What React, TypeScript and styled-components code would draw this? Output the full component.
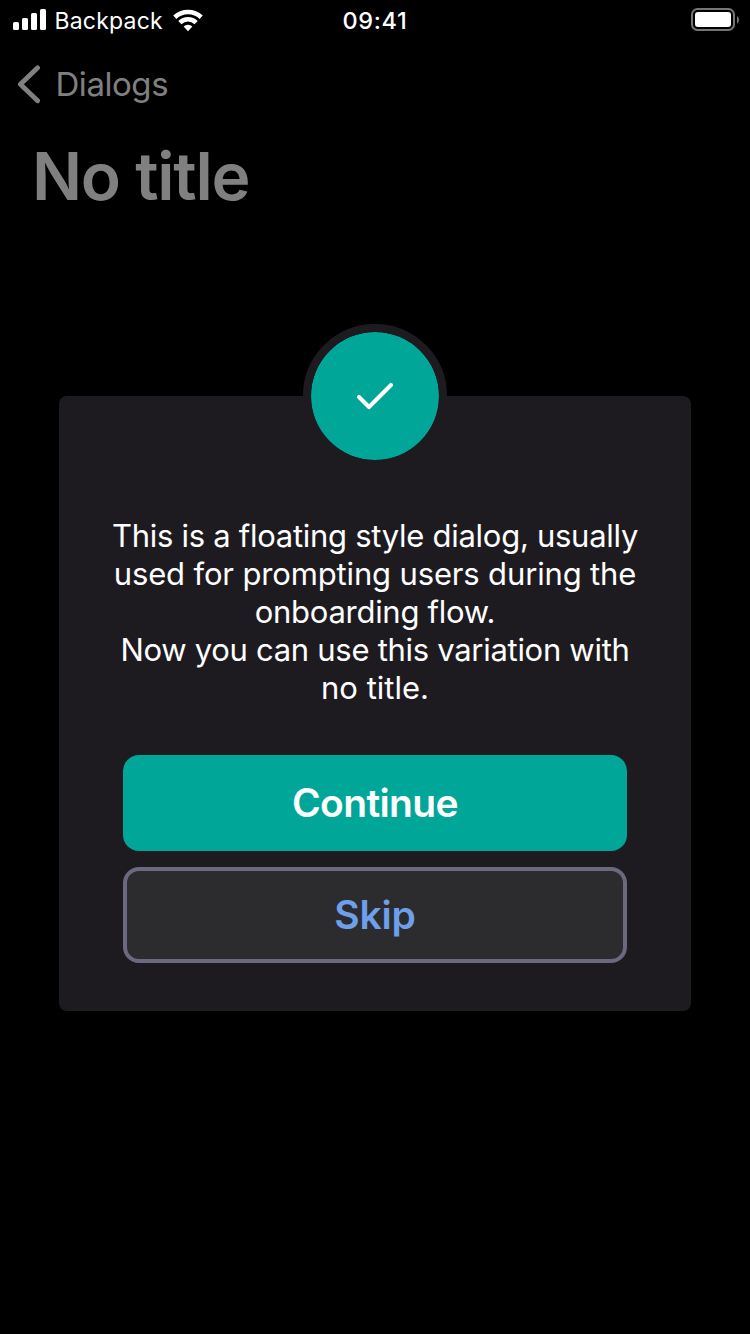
import React from 'react';
import styled, { createGlobalStyle } from 'styled-components';

const GlobalStyle = createGlobalStyle`
  * { box-sizing: border-box; }
  body {
    margin: 0;
    background: #000;
    font-family: Inter, "Liberation Sans", sans-serif;
    -webkit-font-smoothing: antialiased;
  }
`;

const Screen = styled.div`
  width: 750px;
  height: 1334px;
  display: flex;
  flex-direction: column;
  overflow: hidden;
  background: #000;
`;

const StatusBar = styled.header`
  height: 40px;
  display: grid;
  grid-template-columns: 1fr auto 1fr;
  color: #fff;
  font-size: 23px;
  line-height: 42px;
`;

const Network = styled.div`
  display: flex;
  padding-left: 13px;
`;

const Carrier = styled.span`
  width: 124.5px;
  padding-left: 7.5px;
  letter-spacing: 0.2px;
  white-space: nowrap;
`;

const Clock = styled.time`
  font-size: 23.5px;
  font-weight: 550;
  letter-spacing: 0.7px;
`;

const Power = styled.div`
  display: flex;
  justify-content: flex-end;
  padding-right: 11px;
`;

const NavBar = styled.nav`
  height: 88px;
  display: flex;
  align-items: center;
  padding-left: 16px;
  color: #808080;
`;

const BackLabel = styled.span`
  padding-left: 13.5px;
  font-size: 33px;
  line-height: 40px;
  letter-spacing: -0.45px;
`;

const PageTitle = styled.h1`
  margin: 0;
  height: 196px;
  padding: 8px 0 0 32px;
  color: #808080;
  font-size: 66px;
  font-weight: 600;
  line-height: 80px;
  letter-spacing: -1.25px;
`;

const Dialog = styled.section`
  width: 632px;
  align-self: center;
  margin-top: 72px;
  padding: 0 48px 48px;
  border-radius: 8px;
  background: #1e1b20;
  display: flex;
  flex-direction: column;
  align-items: center;
`;

const Badge = styled.div`
  width: 144px;
  height: 144px;
  margin-top: -72px;
  border: 8px solid #1e1b20;
  border-radius: 50%;
  background: #00a698;
  background-clip: padding-box;
  display: flex;
  align-items: center;
  justify-content: center;
`;

const Message = styled.p`
  margin: 49px 0 48px;
  color: #fff;
  font-size: 31px;
  line-height: 38px;
  text-align: center;
`;

const Line = styled.span<{ $tracking?: number }>`
  display: block;
  white-space: nowrap;
  letter-spacing: ${({ $tracking = 0 }) => $tracking}px;
`;

const Actions = styled.div`
  width: 504px;
  display: flex;
  flex-direction: column;
  gap: 16px;
`;

const Button = styled.button<{ $secondary?: boolean }>`
  height: 96px;
  padding: 0;
  border: ${({ $secondary }) => ($secondary ? '4px solid #6a6980' : '0')};
  border-radius: 16px;
  background: ${({ $secondary }) => ($secondary ? '#2c2c2e' : '#00a698')};
  color: ${({ $secondary }) => ($secondary ? '#6d9feb' : '#fff')};
  font-family: inherit;
  font-size: 39px;
  font-weight: 600;
  line-height: 48px;
  letter-spacing: ${({ $secondary }) => ($secondary ? '-0.1px' : '-0.65px')};
`;

const SignalIcon = () => (
  <svg width="34" height="40" fill="#fff">
    <rect x="0" y="22" width="6" height="8" rx="1.5" />
    <rect x="9" y="18" width="6" height="12" rx="1.5" />
    <rect x="18" y="13" width="6" height="17" rx="1.5" />
    <rect x="27" y="9" width="6" height="21" rx="1.5" />
  </svg>
);

const WifiIcon = () => (
  <svg width="32" height="40" viewBox="171.5 0 32 40" fill="none" stroke="#fff" strokeWidth="4.7">
    <path d="M174.3 17.2a19.4 19.4 0 0 1 26.4 0" />
    <path d="M179.4 22.6a11.5 11.5 0 0 1 16.2 0" />
    <path d="M187.5 31.2l-4.4-4.7a6.4 6.4 0 0 1 8.8 0z" fill="#fff" stroke="none" />
  </svg>
);

const BatteryIcon = () => (
  <svg width="48" height="40" fill="none">
    <rect x="1" y="9" width="42" height="21" rx="5.5" stroke="#757575" strokeWidth="2" />
    <rect x="4" y="12" width="36" height="15" rx="3" fill="#fff" />
    <path d="M46 16c2.6 1.4 2.6 6.2 0 7.6z" fill="#757575" />
  </svg>
);

const BackIcon = () => (
  <svg width="26" height="40" viewBox="16 64 26 40" fill="none" stroke="#808080" strokeWidth="4.8" strokeLinecap="round" strokeLinejoin="round">
    <path d="M37.6 67.8L20.4 84.3l17.2 16.5" />
  </svg>
);

const CheckIcon = () => (
  <svg width="48" height="48" viewBox="351 372 48 48" fill="none" stroke="#fff" strokeWidth="4.1" strokeLinecap="round" strokeLinejoin="round">
    <path d="M359 397l10 10 22-22" />
  </svg>
);

export default function App() {
  return (
    <Screen>
      <GlobalStyle />
      <StatusBar>
        <Network>
          <SignalIcon />
          <Carrier>Backpack</Carrier>
          <WifiIcon />
        </Network>
        <Clock>09:41</Clock>
        <Power>
          <BatteryIcon />
        </Power>
      </StatusBar>
      <NavBar>
        <BackIcon />
        <BackLabel>Dialogs</BackLabel>
      </NavBar>
      <PageTitle>No title</PageTitle>
      <Dialog role="dialog">
        <Badge>
          <CheckIcon />
        </Badge>
        <Message>
          <Line $tracking={-0.28}>This is a floating style dialog, usually</Line>
          <Line $tracking={-0.15}>used for prompting users during the</Line>
          <Line $tracking={-0.28}>onboarding flow.</Line>
          <Line $tracking={-0.29}>Now you can use this variation with</Line>
          <Line>no title.</Line>
        </Message>
        <Actions>
          <Button>Continue</Button>
          <Button $secondary>Skip</Button>
        </Actions>
      </Dialog>
    </Screen>
  );
}
